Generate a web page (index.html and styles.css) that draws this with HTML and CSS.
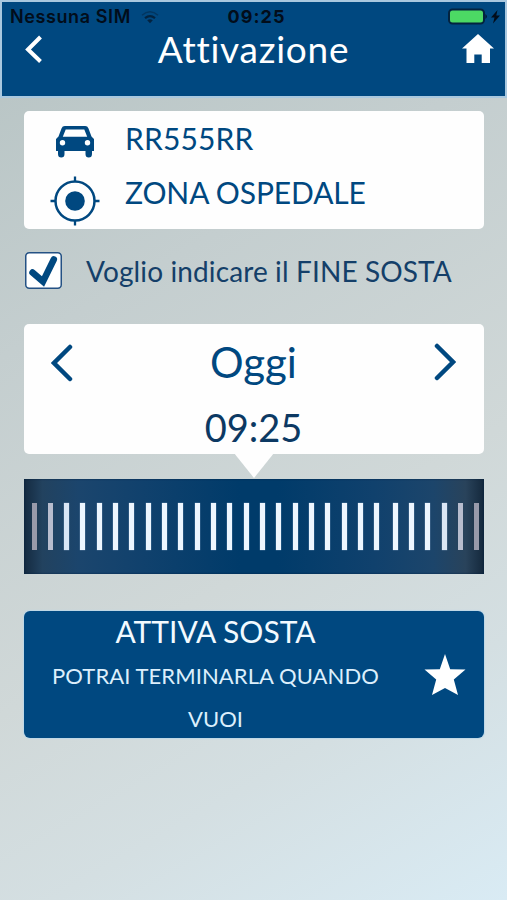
FILE: index.html

```html
<!DOCTYPE html>
<html lang="it">
<head>
<meta charset="utf-8">
<title>Attivazione</title>
<link rel="stylesheet" href="styles.css">
</head>
<body>
<header class="header">
  <div class="status">
    <div class="carrier"><span class="sim">Nessuna SIM</span>
      <svg class="wifi" viewBox="0 0 18 14"><path d="M1 5.2Q9-1.6 17 5.2" fill="none" stroke="currentColor" stroke-width="1.500" opacity=".5"/><path d="M4 8.2Q9 4 14 8.2" fill="none" stroke="currentColor" stroke-width="2.200"/><path d="M6.2 10.3Q9 8.2 11.8 10.3L9 13.2Z"/></svg>
    </div>
    <span class="clock">09:25</span>
    <svg class="battery" viewBox="0 0 54 18"><rect x="1" y="1.5" width="35" height="14" rx="3.5" fill="#4cd964" stroke="#03233f" stroke-width="2"/><path d="M37.5 6Q40 8.500 37.500 11Z"/><path d="M49.500 2L43 9.500H46.500L45 15.500L52 7.500H48.300Z"/></svg>
  </div>
  <div class="nav">
    <svg class="back" viewBox="0 0 18 30"><path d="M15.500 3L3 15.500L15.500 27.500" fill="none" stroke="#fff" stroke-width="4"/></svg>
    <h1 class="title">Attivazione</h1>
    <svg class="home" viewBox="0 0 32 30"><path d="M16 0L32 14.500H28V29H19.700V20.500H12.300V29H4.500V14.500H0Z" fill="#fff"/></svg>
  </div>
</header>
<main class="content">
  <section class="card details">
    <div class="row">
      <svg class="icon car" viewBox="0 0 50 50"><path fill-rule="evenodd" d="M14.800 9H35.200Q37.600 9 38.400 11.200L41.500 19.500L44 22V34H42V37Q42 40.500 38.700 40.500Q35.500 40.500 35.500 37V34H14.500V37Q14.500 40.500 11.300 40.500Q8 40.500 8 37V34H6V22L8.500 19.500L11.600 11.200Q12.400 9 14.800 9ZM15.700 12.500L12.800 19.800H37.200L34.300 12.500ZM12.500 23A2.700 2.700 0 1 0 12.500 28.400A2.700 2.700 0 1 0 12.500 23ZM37.500 23A2.700 2.700 0 1 0 37.500 28.400A2.700 2.700 0 1 0 37.500 23Z"/></svg>
      <span class="plate">RR555RR</span>
    </div>
    <div class="row">
      <svg class="icon target" viewBox="0 0 50 50"><circle cx="25" cy="25" r="19.500" fill="none" stroke="currentColor" stroke-width="2.500"/><circle cx="25" cy="25" r="9.800"/><path d="M25 .5V6M25 44V49.500M.5 25H6M44 25H49.500" stroke="currentColor" stroke-width="2.300"/></svg>
      <span class="zone">ZONA OSPEDALE</span>
    </div>
  </section>
  <label class="option">
    <svg class="check" viewBox="0 0 37 37"><rect x=".75" y=".75" width="35.500" height="35.500" rx="3.500" fill="#fff" stroke="#245184" stroke-width="1.500"/><path d="M7.500 20.500L18 29.500L28.800 7.500" fill="none" stroke="currentColor" stroke-width="6.500" stroke-linecap="round"/></svg>
    <span class="option-text">Voglio indicare il FINE SOSTA</span>
  </label>
  <section class="card picker">
    <div class="day-row">
      <svg class="chevron" viewBox="0 0 22 38"><path d="M19 3L3 19L19 35" fill="none" stroke="currentColor" stroke-width="4.500" stroke-linecap="round"/></svg>
      <span class="day">Oggi</span>
      <svg class="chevron next" viewBox="0 0 22 38"><path d="M3 3L19 19L3 35" fill="none" stroke="currentColor" stroke-width="4.500" stroke-linecap="round"/></svg>
    </div>
    <div class="time">09:25</div>
  </section>
  <div class="dial">
    <i></i><i></i><i></i><i></i><i></i><i></i><i></i><i></i><i></i><i></i><i></i><i></i><i></i><i></i><i></i><i></i><i></i><i></i><i></i><i></i><i></i><i></i><i class="seam"></i><i></i><i></i><i></i><i></i><i></i>
  </div>
  <button class="activate">
    <span class="labels"><span class="main-label">ATTIVA SOSTA</span><span class="sub-label">POTRAI TERMINARLA QUANDO</span><span class="sub-label">VUOI</span></span>
    <svg class="star" viewBox="0 0 42 42"><path d="M21 0L26.200 15.300L41.500 15.500L29.800 25.500L34 41L21 34L8 41L12.200 25.500L.5 15.500L15.800 15.300Z" fill="#fff"/></svg>
  </button>
</main>
</body>
</html>
```

FILE: styles.css

```css
* { box-sizing: border-box; }
body {
  margin: 0;
  height: 900px;
  padding: 2px 2px 0 2px;
  overflow: hidden;
  color: #004880;
  font-family: Lato, sans-serif;
  background: linear-gradient(150deg, #b6c3c3 0%, #c4cecf 30%, #d0d8d8 60%, #d4dfe2 78%, #d9ebf4 100%);
}
svg { display: block; fill: currentColor; flex: none; }
.header {
  height: 94px;
  background: #004880;
  box-shadow: 0 0 0 2px #a9c8df;
}
.status {
  height: 30px;
  display: grid;
  grid-template-columns: 1fr auto 1fr;
  align-items: center;
  padding: 0 3px 0 8px;
  color: #020d1a;
  font: 600 18px/30px Inter, sans-serif;
}
.carrier { display: flex; align-items: center; gap: 10px; }
.sim { letter-spacing: .6px; }
.wifi { width: 18px; height: 14px; color: #03233f; }
.clock { font-weight: 700; letter-spacing: 1.1px; padding-left: 1px; }
.battery { width: 54px; height: 18px; justify-self: end; }
.nav {
  height: 34px;
  display: grid;
  grid-template-columns: 60px 1fr 72px;
  align-items: center;
  padding: 0 11px 0 23px;
}
.back { width: 18px; height: 30px; }
.title {
  margin: 0;
  color: #fff;
  font-size: 37px;
  font-weight: 400;
  line-height: 34px;
  letter-spacing: .75px;
  font-variant-ligatures: none;
  text-align: center;
  white-space: nowrap;
}
.home { width: 32px; height: 30px; justify-self: end; }
.content { padding: 15px 21px 0 22px; }
.card { border-radius: 5px; background: #fefefe; }
.details { height: 118px; padding-left: 26px; }
.row {
  height: 54px;
  display: flex;
  align-items: center;
  gap: 25px;
  font-size: 30px;
  white-space: nowrap;
}
.icon { width: 50px; height: 50px; }
.car { margin-top: 8px; }
.target { margin-top: 18px; }
.plate { letter-spacing: .15px; }
.zone { letter-spacing: -.12px; }
.option {
  height: 37px;
  margin: 23px 0 35px 1px;
  display: flex;
  align-items: center;
  gap: 24px;
  font-size: 28px;
  line-height: 36px;
  letter-spacing: .12px;
  color: #143f69;
  white-space: nowrap;
}
.check { width: 37px; height: 37px; color: #004880; }
.picker { position: relative; height: 130px; text-align: center; }
.picker::after {
  content: "";
  position: absolute;
  top: 129px;
  left: 210px;
  width: 40px;
  height: 25px;
  background: #fefefe;
  clip-path: polygon(0 0, 100% 0, 50% 100%);
}
.day-row {
  height: 74px;
  display: flex;
  align-items: center;
  justify-content: space-between;
  padding: 0 28px 0 27px;
}
.day { font-size: 42px; line-height: 74px; padding-top: 2px; }
.chevron { width: 22px; height: 38px; margin-top: 4px; }
.next { margin-top: 2px; }
.time { font-size: 38px; line-height: 58px; color: #0c3963; padding-right: 1px; }
.dial {
  height: 95px;
  margin-top: 25px;
  padding: 24px 0 0 7.500px;
  display: flex;
  gap: 11.330px;
  overflow: hidden;
  background: linear-gradient(90deg, #142a40 0, #22425f 4%, #1b456d 12%, #10416d 26%, #003b6a 47%, #003b6a 55%, #10416d 76%, #1c456b 89%, #29435b 96%, #14283c 100%);
  box-shadow: inset 0 0 2px #001f40;
}
.dial i {
  flex: none;
  width: 5px;
  height: 47px;
  background: #edf6ff;
  box-shadow: 0 0 1px #a9c5de;
}
.dial .seam { margin-left: 2px; }
.dial i:first-child, .dial i:last-child { background: #989aaa; box-shadow: none; }
.dial i:nth-child(2), .dial i:nth-child(27) { background: #b8bdce; box-shadow: none; }
.dial i:nth-child(3), .dial i:nth-child(26) { background: #dae6f5; }
.activate {
  width: 100%;
  height: 127px;
  margin: 37px 0 0;
  padding: 0;
  border: 0;
  border-radius: 6px;
  display: flex;
  align-items: center;
  background: #004880;
  box-shadow: 0 0 1px 1px #bdd7e7;
  color: #f2faff;
  font-family: inherit;
  text-align: center;
}
.labels { width: 383px; height: 127px; display: flex; flex-direction: column; white-space: nowrap; }
.main-label { flex: none; font-size: 30px; line-height: 40px; height: 44px; }
.sub-label { flex: none; font-size: 22px; line-height: 42.500px; color: #dceffc; letter-spacing: .08px; }
.star { width: 42px; height: 42px; margin-left: 17px; }
```
